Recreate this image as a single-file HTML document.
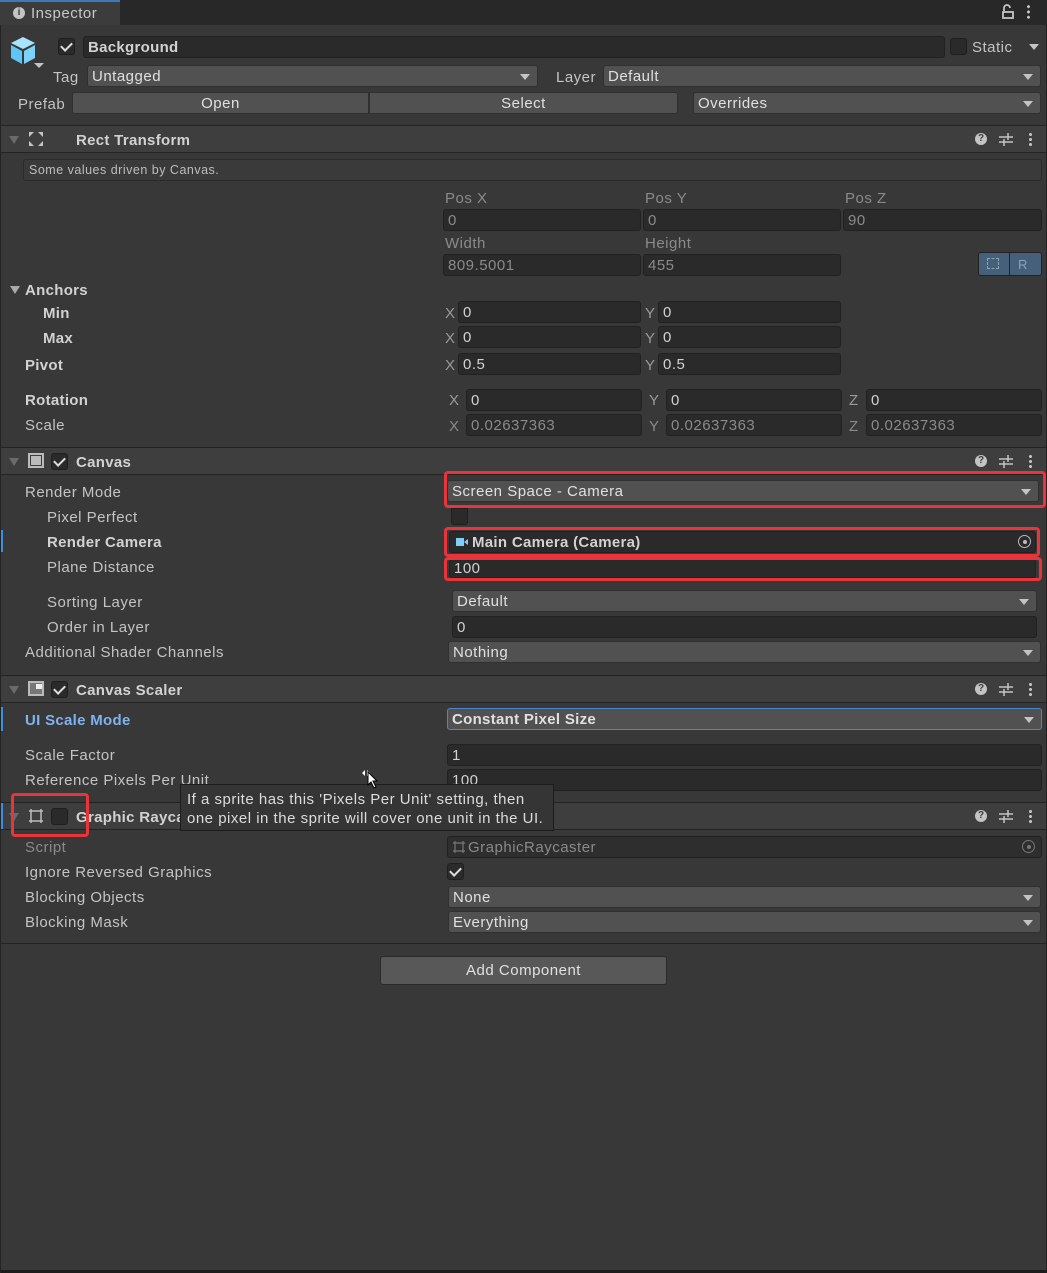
<!DOCTYPE html>
<html><head><meta charset="utf-8"><style>
*{box-sizing:border-box;margin:0;padding:0}
body{width:1047px;height:1273px;background:#383838;font-family:"Liberation Sans",sans-serif;font-size:15px;letter-spacing:.5px;color:#c4c4c4;position:relative;overflow:hidden}
div{position:absolute}
.l{white-space:nowrap;line-height:18px;margin-top:1px}
.b{font-weight:bold;color:#d2d2d2;letter-spacing:.3px}
.f{background:#2a2a2a;border:1px solid #212121;border-radius:3px;height:22px;padding-left:4px;line-height:21px;color:#d2d2d2;white-space:nowrap;overflow:hidden}
.d{background:#515151;border:1px solid #303030;border-radius:3px;height:22px;padding-left:4px;line-height:21px;color:#e0e0e0;white-space:nowrap}
.d::after{content:"";position:absolute;right:7px;top:8px;border-left:5px solid transparent;border-right:5px solid transparent;border-top:6px solid #c4c4c4}
.d.nb::after{display:none}
.hl{height:1px;background:#232323;left:0;width:1047px}
.hd{left:0;width:1047px;height:26px;background:#3e3e3e}
.cb{width:17px;height:17px;background:#2a2a2a;border:1px solid #1f1f1f;border-radius:3px}
.cb.on::after{content:"";position:absolute;left:4px;top:1px;width:5px;height:9px;border:solid #ddd;border-width:0 2px 2px 0;transform:rotate(45deg)}
.tri{width:0;height:0;border-left:5px solid transparent;border-right:5px solid transparent;border-top:8px solid #6a6a6a}
.ax{color:#9a9a9a}
.red{border:3px solid #e8343a;border-radius:4px}
.dim{color:#8a8a8a}
</style></head><body>
<div style="left:0;top:0;width:1047px;height:25px;background:#282828"></div>
<div style="left:0;top:0;width:120px;height:25px;background:#3c3c3c;border-top:2px solid #3a79bb"></div>
<div style="left:13px;top:7px;width:12px;height:12px;border-radius:50%;background:#c4c4c4;color:#3c3c3c;font-size:10px;font-weight:bold;line-height:12px;text-align:center;letter-spacing:0">i</div>
<div class="l" style="left:31px;top:4px;color:#c8c8c8">Inspector</div>
<svg style="position:absolute;left:1001px;top:4px" width="14" height="15" viewBox="0 0 14 15" fill="none" stroke="#c4c4c4" stroke-width="1.8"><path d="M3 7V4a3 3 0 0 1 6 0"/><rect x="2" y="8" width="10" height="6"/></svg>
<div style="left:1027px;top:4px;width:3px;height:16px;background:radial-gradient(circle,#c4c4c4 1.4px,transparent 1.6px) 0 0/3px 5.3px"></div>
<svg style="position:absolute;left:9px;top:36px" width="28" height="28" viewBox="0 0 28 28"><polygon points="14,1 26,7 14,13 2,7" fill="#a9e4ff"/><polygon points="2,9 13,15 13,28 2,22" fill="#5ec6f7"/><polygon points="15,15 26,9 26,22 15,28" fill="#7bd3fb"/></svg>
<div style="left:34px;top:63px;border-left:5px solid transparent;border-right:5px solid transparent;border-top:5px solid #c4c4c4"></div>
<div class="cb on" style="left:58px;top:38px"></div>
<div class="f b" style="left:83px;top:36px;width:862px">Background</div>
<div class="cb" style="left:950px;top:38px"></div>
<div class="l" style="left:972px;top:38px">Static</div>
<div style="left:1029px;top:44px;border-left:5px solid transparent;border-right:5px solid transparent;border-top:6px solid #c4c4c4"></div>
<div class="l" style="left:53px;top:68px">Tag</div>
<div class="d" style="left:87px;top:65px;width:451px">Untagged</div>
<div class="l" style="left:556px;top:68px">Layer</div>
<div class="d" style="left:603px;top:65px;width:438px">Default</div>
<div class="l" style="left:18px;top:95px">Prefab</div>
<div class="d nb" style="left:72px;top:92px;width:297px;text-align:center;border-radius:3px 0 0 3px;padding:0">Open</div>
<div class="d nb" style="left:369px;top:92px;width:309px;text-align:center;border-radius:0 3px 3px 0;padding:0">Select</div>
<div class="d" style="left:693px;top:92px;width:348px">Overrides</div>
<div class="hl" style="top:125px"></div>
<div class="hd" style="top:126px"></div>
<div class="tri" style="left:9px;top:136px"></div>
<svg style="position:absolute;left:28px;top:131px" width="16" height="16" viewBox="0 0 16 16" fill="#c4c4c4"><polygon points="1,1 6,1 1,6"/><polygon points="15,1 10,1 15,6"/><polygon points="1,15 6,15 1,10"/><polygon points="15,15 10,15 15,10"/></svg>
<div class="l b" style="left:76px;top:131px">Rect Transform</div>
<div class="hl" style="top:152px"></div>
<div style="left:23px;top:159px;width:1019px;height:22px;background:#3a3a3a;border:1px solid #2a2a2a;border-radius:3px;font-size:12.5px;line-height:20px;padding-left:5px;color:#bdbdbd;letter-spacing:.5px">Some values driven by Canvas.</div>
<div class="l dim" style="left:445px;top:189px">Pos X</div><div class="l dim" style="left:645px;top:189px">Pos Y</div><div class="l dim" style="left:845px;top:189px">Pos Z</div>
<div class="f dim" style="left:443px;top:209px;width:198px">0</div><div class="f dim" style="left:643px;top:209px;width:198px">0</div><div class="f dim" style="left:843px;top:209px;width:199px">90</div>
<div class="l dim" style="left:445px;top:234px">Width</div><div class="l dim" style="left:645px;top:234px">Height</div>
<div class="f dim" style="left:443px;top:254px;width:198px">809.5001</div><div class="f dim" style="left:643px;top:254px;width:198px">455</div>
<div style="left:978px;top:252px;width:64px;height:24px;background:#46607c;border:1px solid #222;border-radius:3px"></div>
<div style="left:1009px;top:253px;width:1px;height:22px;background:#222"></div>
<div style="left:987px;top:258px;width:12px;height:11px;border:1px dashed #8aa"></div>
<div class="l" style="left:1018px;top:255px;color:#8aa0b8;font-size:13px">R</div>
<div class="tri" style="left:10px;top:286px;border-top-color:#aaa"></div>
<div class="l b" style="left:25px;top:281px">Anchors</div>
<div class="l b" style="left:43px;top:304px">Min</div>
<div class="l b" style="left:43px;top:329px">Max</div>
<div class="l b" style="left:25px;top:356px">Pivot</div>
<div class="l ax" style="left:445px;top:304px">X</div><div class="f" style="left:458px;top:301px;width:183px">0</div>
<div class="l ax" style="left:645px;top:304px">Y</div><div class="f" style="left:658px;top:301px;width:183px">0</div>
<div class="l ax" style="left:445px;top:329px">X</div><div class="f" style="left:458px;top:326px;width:183px">0</div>
<div class="l ax" style="left:645px;top:329px">Y</div><div class="f" style="left:658px;top:326px;width:183px">0</div>
<div class="l ax" style="left:445px;top:356px">X</div><div class="f" style="left:458px;top:353px;width:183px">0.5</div>
<div class="l ax" style="left:645px;top:356px">Y</div><div class="f" style="left:658px;top:353px;width:183px">0.5</div>
<div class="l b" style="left:25px;top:391px">Rotation</div>
<div class="l" style="left:25px;top:416px">Scale</div>
<div class="l ax" style="left:449px;top:391px">X</div><div class="f" style="left:466px;top:389px;width:176px">0</div>
<div class="l ax" style="left:649px;top:391px">Y</div><div class="f" style="left:666px;top:389px;width:176px">0</div>
<div class="l ax" style="left:849px;top:391px">Z</div><div class="f" style="left:866px;top:389px;width:176px">0</div>
<div class="l dim" style="left:449px;top:417px">X</div><div class="f dim" style="left:466px;top:414px;width:176px">0.02637363</div>
<div class="l dim" style="left:649px;top:417px">Y</div><div class="f dim" style="left:666px;top:414px;width:176px">0.02637363</div>
<div class="l dim" style="left:849px;top:417px">Z</div><div class="f dim" style="left:866px;top:414px;width:176px">0.02637363</div>
<div class="hl" style="top:447px"></div>
<div class="hd" style="top:448px"></div>
<div class="tri" style="left:9px;top:458px"></div>
<div style="left:28px;top:453px;width:16px;height:15px;border:2px solid #bbb"></div><div style="left:31px;top:456px;width:10px;height:9px;background:#bbb"></div>
<div class="cb on" style="left:51px;top:453px"></div>
<div class="l b" style="left:76px;top:453px">Canvas</div>
<div class="hl" style="top:474px"></div>
<div class="l" style="left:25px;top:483px">Render Mode</div>
<div class="l" style="left:47px;top:508px">Pixel Perfect</div>
<div style="left:0;top:530px;width:3px;height:22px;background:#3a8ee6"></div>
<div class="l b" style="left:47px;top:533px">Render Camera</div>
<div class="l" style="left:47px;top:558px">Plane Distance</div>
<div class="l" style="left:47px;top:593px">Sorting Layer</div>
<div class="l" style="left:47px;top:618px">Order in Layer</div>
<div class="l" style="left:25px;top:643px">Additional Shader Channels</div>
<div class="d" style="left:447px;top:480px;width:592px">Screen Space - Camera</div>
<div class="red" style="left:444px;top:471px;width:602px;height:37px"></div>
<div class="cb" style="left:451px;top:508px;border-radius:0 0 3px 3px"></div>
<div class="f b" style="left:449px;top:531px;width:587px;padding-left:22px">Main Camera (Camera)</div>
<div style="left:456px;top:538px;width:8px;height:8px;background:#7fd0f8"></div><div style="left:464px;top:539px;border-right:4px solid #7fd0f8;border-top:3px solid transparent;border-bottom:3px solid transparent"></div>
<div style="left:1018px;top:535px;width:13px;height:13px;border:1.5px solid #bbb;border-radius:50%"></div><div style="left:1022.5px;top:539.5px;width:4px;height:4px;background:#bbb;border-radius:50%"></div>
<div class="red" style="left:444px;top:527px;width:596px;height:30px"></div>
<div class="f" style="left:449px;top:559px;width:587px;height:19px;line-height:17px">100</div>
<div class="red" style="left:444px;top:557px;width:598px;height:24px"></div>
<div class="d" style="left:452px;top:590px;width:585px">Default</div>
<div class="f" style="left:452px;top:616px;width:585px">0</div>
<div class="d" style="left:448px;top:641px;width:593px">Nothing</div>
<div class="hl" style="top:675px"></div>
<div class="hd" style="top:676px"></div>
<div class="tri" style="left:9px;top:686px"></div>
<div style="left:28px;top:681px;width:16px;height:15px;border:2px solid #bbb;background:#777"></div><div style="left:36px;top:684px;width:6px;height:5px;background:#eee"></div>
<div class="cb on" style="left:51px;top:681px"></div>
<div class="l b" style="left:76px;top:681px">Canvas Scaler</div>
<div class="hl" style="top:702px"></div>
<div style="left:0;top:707px;width:3px;height:24px;background:#3a8ee6"></div>
<div class="l b" style="left:25px;top:711px;color:#7fb2f0">UI Scale Mode</div>
<div class="d b" style="left:447px;top:708px;width:595px;border-color:#4a86c8">Constant Pixel Size</div>
<div class="l" style="left:25px;top:746px">Scale Factor</div>
<div class="f" style="left:447px;top:744px;width:595px">1</div>
<div class="l" style="left:25px;top:771px">Reference Pixels Per Unit</div>
<div class="f" style="left:447px;top:769px;width:595px">100</div>
<div class="hl" style="top:802px"></div>
<div class="hd" style="top:803px"></div>
<div style="left:0;top:803px;width:3px;height:26px;background:#3a8ee6"></div>
<div class="tri" style="left:9px;top:813px"></div>
<svg style="position:absolute;left:28px;top:808px" width="16" height="16" viewBox="0 0 16 16" fill="none" stroke="#bbb" stroke-width="1.5"><path d="M3 1v14M13 1v14M1 3h14M1 13h14"/></svg>
<div class="cb" style="left:51px;top:808px"></div>
<div class="l b" style="left:76px;top:808px">Graphic Raycaster</div>
<div class="hl" style="top:829px"></div>
<div class="red" style="left:11px;top:793px;width:78px;height:44px"></div>
<div style="left:180px;top:784px;width:374px;height:47px;background:#353535;border:1px solid #1c1c1c;color:#dcdcdc;font-size:15px;line-height:19px;padding:5px 0 0 6px;white-space:nowrap">If a sprite has this 'Pixels Per Unit' setting, then<br>one pixel in the sprite will cover one unit in the UI.</div>
<svg style="position:absolute;left:360px;top:768px" width="20" height="22" viewBox="0 0 20 22"><path d="M2 5l3-3v6z M10 5l-3-3v6z" fill="#fff"/><path d="M8 4v13l3-3 3 6 2-1-3-6h4z" fill="#fff" stroke="#000" stroke-width="1"/></svg>
<div class="l dim" style="left:25px;top:838px">Script</div>
<div class="f dim" style="left:447px;top:836px;width:595px;background:#2e2e2e;padding-left:20px">GraphicRaycaster</div>
<svg style="position:absolute;left:453px;top:841px" width="12" height="12" viewBox="0 0 12 12" fill="none" stroke="#777" stroke-width="1.2"><path d="M2 0v12M10 0v12M0 2h12M0 10h12"/></svg>
<div style="left:1022px;top:840px;width:13px;height:13px;border:1.5px solid #777;border-radius:50%"></div><div style="left:1026.5px;top:844.5px;width:4px;height:4px;background:#777;border-radius:50%"></div>
<div class="l" style="left:25px;top:863px">Ignore Reversed Graphics</div>
<div class="cb on" style="left:447px;top:863px"></div>
<div class="l" style="left:25px;top:888px">Blocking Objects</div>
<div class="d" style="left:448px;top:886px;width:593px">None</div>
<div class="l" style="left:25px;top:913px">Blocking Mask</div>
<div class="d" style="left:448px;top:911px;width:593px">Everything</div>
<div class="hl" style="top:943px"></div>
<div class="d nb" style="left:380px;top:956px;width:287px;height:29px;line-height:28px;text-align:center;background:#585858;border-color:#2a2a2a;padding:0">Add Component</div>
<div style="left:0;top:1270px;width:1047px;height:3px;background:#1c1c1c"></div>
<div style="left:0;top:25px;width:1px;height:1248px;background:#232323"></div>
<div style="left:1046px;top:25px;width:1px;height:1248px;background:#232323"></div>
<div style="left:975px;top:133px;width:12px;height:12px;border-radius:50%;background:#c4c4c4;color:#3e3e3e;font-size:10px;font-weight:bold;line-height:12px;text-align:center;letter-spacing:0">?</div>
<div style="left:975px;top:455px;width:12px;height:12px;border-radius:50%;background:#c4c4c4;color:#3e3e3e;font-size:10px;font-weight:bold;line-height:12px;text-align:center;letter-spacing:0">?</div>
<div style="left:975px;top:683px;width:12px;height:12px;border-radius:50%;background:#c4c4c4;color:#3e3e3e;font-size:10px;font-weight:bold;line-height:12px;text-align:center;letter-spacing:0">?</div>
<div style="left:975px;top:810px;width:12px;height:12px;border-radius:50%;background:#c4c4c4;color:#3e3e3e;font-size:10px;font-weight:bold;line-height:12px;text-align:center;letter-spacing:0">?</div>
<svg style="position:absolute;left:999px;top:132px" width="14" height="14" viewBox="0 0 14 14" stroke="#c4c4c4" stroke-width="1.5"><path d="M0 5h14M0 10h14M9 1v7M5 7v7"/></svg>
<svg style="position:absolute;left:999px;top:454px" width="14" height="14" viewBox="0 0 14 14" stroke="#c4c4c4" stroke-width="1.5"><path d="M0 5h14M0 10h14M9 1v7M5 7v7"/></svg>
<svg style="position:absolute;left:999px;top:682px" width="14" height="14" viewBox="0 0 14 14" stroke="#c4c4c4" stroke-width="1.5"><path d="M0 5h14M0 10h14M9 1v7M5 7v7"/></svg>
<svg style="position:absolute;left:999px;top:809px" width="14" height="14" viewBox="0 0 14 14" stroke="#c4c4c4" stroke-width="1.5"><path d="M0 5h14M0 10h14M9 1v7M5 7v7"/></svg>
<div style="left:1029px;top:132px;width:3px;height:15px;background:radial-gradient(circle,#c4c4c4 1.4px,transparent 1.6px) 0 0/3px 5px"></div>
<div style="left:1029px;top:454px;width:3px;height:15px;background:radial-gradient(circle,#c4c4c4 1.4px,transparent 1.6px) 0 0/3px 5px"></div>
<div style="left:1029px;top:682px;width:3px;height:15px;background:radial-gradient(circle,#c4c4c4 1.4px,transparent 1.6px) 0 0/3px 5px"></div>
<div style="left:1029px;top:809px;width:3px;height:15px;background:radial-gradient(circle,#c4c4c4 1.4px,transparent 1.6px) 0 0/3px 5px"></div>
</body></html>
